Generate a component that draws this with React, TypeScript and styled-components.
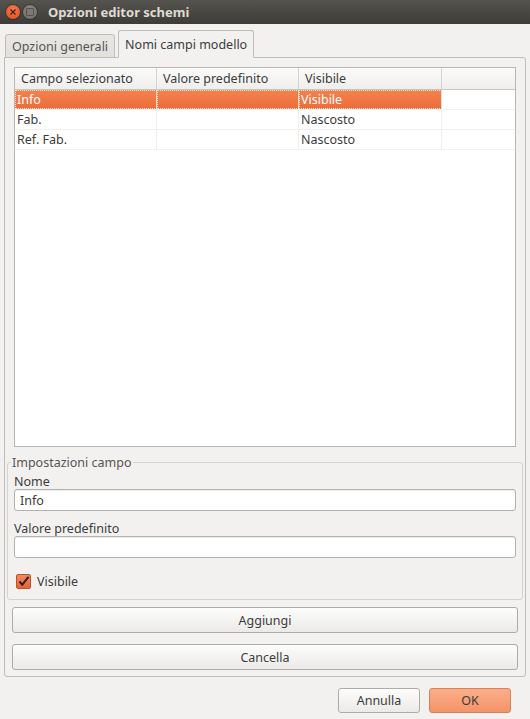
import styled, { createGlobalStyle } from 'styled-components'

const rows = [
  { name: 'Info', def: '', vis: 'Visibile' },
  { name: 'Fab.', def: '', vis: 'Nascosto' },
  { name: 'Ref. Fab.', def: '', vis: 'Nascosto' },
]

const App = () => {
  return (
    <Window>
      <GlobalStyle />
      <TitleBar>
        <WinButton $kind="close">
          <svg width="8" height="8" viewBox="0 0 8 8">
            <path d="M1.5 1.5 L6.5 6.5 M6.5 1.5 L1.5 6.5" stroke="#4a1a0a" strokeWidth="1.3" />
          </svg>
        </WinButton>
        <WinButton $kind="min">
          <MinSquare />
        </WinButton>
        <Title>Opzioni editor schemi</Title>
      </TitleBar>

      <Body>
        <TabBar>
          <Tab>Opzioni generali</Tab>
          <Tab $active>Nomi campi modello</Tab>
        </TabBar>
        <Panel>
          <Table>
            <HeaderRow>
              <HeadCell>Campo selezionato</HeadCell>
              <HeadCell>Valore predefinito</HeadCell>
              <HeadCell>Visibile</HeadCell>
              <HeadCell $last />
            </HeaderRow>
            {rows.map((r, i) => (
              <Row key={r.name}>
                <Cell $selected={i === 0}>{r.name}</Cell>
                <Cell $selected={i === 0}>{r.def}</Cell>
                <Cell $selected={i === 0}>{r.vis}</Cell>
                <Cell $last />
              </Row>
            ))}
          </Table>

          <Group>
            <Legend>Impostazioni campo</Legend>
            <FieldLabel>Nome</FieldLabel>
            <Input>Info</Input>
            <FieldLabel $spaced>Valore predefinito</FieldLabel>
            <Input />
            <CheckRow>
              <CheckBox>
                <svg width="13" height="13" viewBox="0 0 13 13">
                  <path d="M2.5 6.5 L5.3 9.6 L11.5 1.8" fill="none" stroke="#3a1c10" strokeWidth="2" />
                </svg>
              </CheckBox>
              Visibile
            </CheckRow>
          </Group>

          <WideButton>Aggiungi</WideButton>
          <WideButton $gap>Cancella</WideButton>
        </Panel>

        <Footer>
          <DialogButton>Annulla</DialogButton>
          <DialogButton $primary>OK</DialogButton>
        </Footer>
      </Body>
    </Window>
  )
}

export default App

const GlobalStyle = createGlobalStyle`
  body {
    margin: 0;
    background: #f2f1f0;
    font-family: "Noto Sans", "DejaVu Sans", sans-serif;
    font-size: 12px;
    color: #3c3c3c;
  }
`

const Window = styled.div`
  width: 530px;
  height: 719px;
  background: #f2f1f0;
  display: flex;
  flex-direction: column;
  overflow: hidden;
`

const TitleBar = styled.div`
  height: 24px;
  flex: none;
  display: flex;
  align-items: center;
  padding-left: 6px;
  gap: 3px;
  background: linear-gradient(#55534d, #3d3c38);
`

const WinButton = styled.div<{ $kind: 'close' | 'min' }>`
  width: 14px;
  height: 14px;
  border-radius: 50%;
  display: flex;
  align-items: center;
  justify-content: center;
  background: ${(p) =>
    p.$kind === 'close'
      ? 'radial-gradient(circle at 50% 35%, #f47a52, #df4a1a)'
      : 'radial-gradient(circle at 50% 35%, #8d8b86, #6a6863)'};
  box-shadow: 0 0 0 1px rgba(0, 0, 0, 0.25);
`

const MinSquare = styled.div`
  width: 6px;
  height: 6px;
  border: 1px solid #55534f;
  border-radius: 1px;
  background: #7b7974;
`

const Title = styled.div`
  margin-left: 8px;
  font-weight: bold;
  font-size: 13px;
  color: #dfdbd2;
`

const Body = styled.div`
  flex: 1;
  display: flex;
  flex-direction: column;
  padding: 6px 4px 0 4px;
`

const TabBar = styled.div`
  display: flex;
  align-items: flex-end;
  height: 28px;
  flex: none;
  padding-left: 1px;
  gap: 3px;
  position: relative;
  z-index: 1;
  margin-bottom: -1px;
`

const Tab = styled.div<{ $active?: boolean }>`
  height: ${(p) => (p.$active ? '28px' : '24px')};
  box-sizing: border-box;
  padding: 0 6px;
  display: flex;
  align-items: center;
  border: 1px solid #bfbdb8;
  border-bottom: ${(p) => (p.$active ? '1px solid #f2f1f0' : '1px solid #bfbdb8')};
  border-radius: 3px 3px 0 0;
  background: ${(p) => (p.$active ? '#f2f1f0' : 'linear-gradient(#e9e7e4, #e2e0dc)')};
  color: ${(p) => (p.$active ? '#3c3c3c' : '#555')};
  font-size: 12.5px;
`

const Panel = styled.div`
  height: 620px;
  flex: none;
  box-sizing: border-box;
  border: 1px solid #bfbdb8;
  border-radius: 0 3px 3px 3px;
  display: flex;
  flex-direction: column;
  padding: 9px 2px 0 2px;

  & > * {
    flex: none;
  }
`

const Table = styled.div`
  margin: 0 7px;
  height: 380px;
  box-sizing: border-box;
  border: 1px solid #b9b7b3;
  background: #fff;
`

const HeaderRow = styled.div`
  display: grid;
  grid-template-columns: 142px 142px 143px 1fr;
  height: 21px;
  border-bottom: 1px solid #c8c6c2;
  background: linear-gradient(#fbfbfa, #efeeec);
`

const HeadCell = styled.div<{ $last?: boolean }>`
  display: flex;
  align-items: center;
  padding-left: 6px;
  border-right: ${(p) => (p.$last ? 'none' : '1px solid #d6d4d1')};
  font-size: 12.5px;
  color: #3c3c3c;
`

const Row = styled.div`
  display: grid;
  grid-template-columns: 142px 142px 143px 1fr;
  height: 19px;
  border-bottom: 1px solid #f2f1f0;
`

const Cell = styled.div<{ $selected?: boolean; $last?: boolean }>`
  display: flex;
  align-items: center;
  padding-left: 2px;
  box-sizing: border-box;
  border-right: ${(p) => (p.$last ? 'none' : p.$selected ? '1px solid #fbd6c4' : '1px solid #efeeec')};
  background: ${(p) => (p.$selected ? 'linear-gradient(#f3834f, #ea6c3a)' : 'transparent')};
  color: ${(p) => (p.$selected ? '#fff' : '#3c3c3c')};
  outline: ${(p) => (p.$selected ? '1px dotted #fde2d4' : 'none')};
  outline-offset: -1px;
  font-size: 12.5px;
`

const Group = styled.fieldset`
  margin: 7px 0 0 0;
  padding: 0 6px 9px 6px;
  border: 1px solid #d5d3cf;
  border-radius: 3px;
  display: flex;
  flex-direction: column;
  min-width: 0;
`

const Legend = styled.legend`
  padding: 0 1px;
  margin-left: -3px;
  font-size: 12.5px;
  color: #555;
`

const FieldLabel = styled.div<{ $spaced?: boolean }>`
  font-size: 12.5px;
  line-height: 14px;
  margin-top: ${(p) => (p.$spaced ? '11px' : '4px')};
  margin-bottom: 0;
`

const Input = styled.div`
  height: 22px;
  box-sizing: border-box;
  border: 1px solid #b3b1ad;
  border-radius: 3px;
  background: #fff;
  box-shadow: inset 0 1px 1px rgba(0, 0, 0, 0.08);
  padding-left: 5px;
  display: flex;
  align-items: center;
  font-size: 12.5px;
`

const CheckRow = styled.div`
  display: flex;
  align-items: center;
  gap: 6px;
  margin-top: 15px;
  padding-left: 2px;
  font-size: 12.5px;
`

const CheckBox = styled.div`
  width: 15px;
  height: 15px;
  box-sizing: border-box;
  border: 1px solid #b9532c;
  border-radius: 2px;
  background: linear-gradient(#f08a5f, #e2653a);
  display: flex;
  align-items: center;
  justify-content: center;
`

const WideButton = styled.div<{ $gap?: boolean }>`
  margin: ${(p) => (p.$gap ? '11px' : '7px')} 5px 0 5px;
  height: 26px;
  box-sizing: border-box;
  border: 1px solid #aeaca8;
  border-radius: 3px;
  background: linear-gradient(#fdfdfc, #ebeae8);
  display: flex;
  align-items: center;
  justify-content: center;
  font-size: 12.5px;
  color: #3c3c3c;
`

const Footer = styled.div`
  display: flex;
  justify-content: flex-end;
  gap: 9px;
  padding: 11px 15px 0 0;
`

const DialogButton = styled.div<{ $primary?: boolean }>`
  width: 82px;
  height: 25px;
  box-sizing: border-box;
  border: 1px solid ${(p) => (p.$primary ? '#d2825f' : '#aeaca8')};
  border-radius: 3px;
  background: ${(p) =>
    p.$primary ? 'linear-gradient(#fbae8a, #f59368)' : 'linear-gradient(#fdfdfc, #ebeae8)'};
  display: flex;
  align-items: center;
  justify-content: center;
  font-size: 12.5px;
  color: #3c3c3c;
`
